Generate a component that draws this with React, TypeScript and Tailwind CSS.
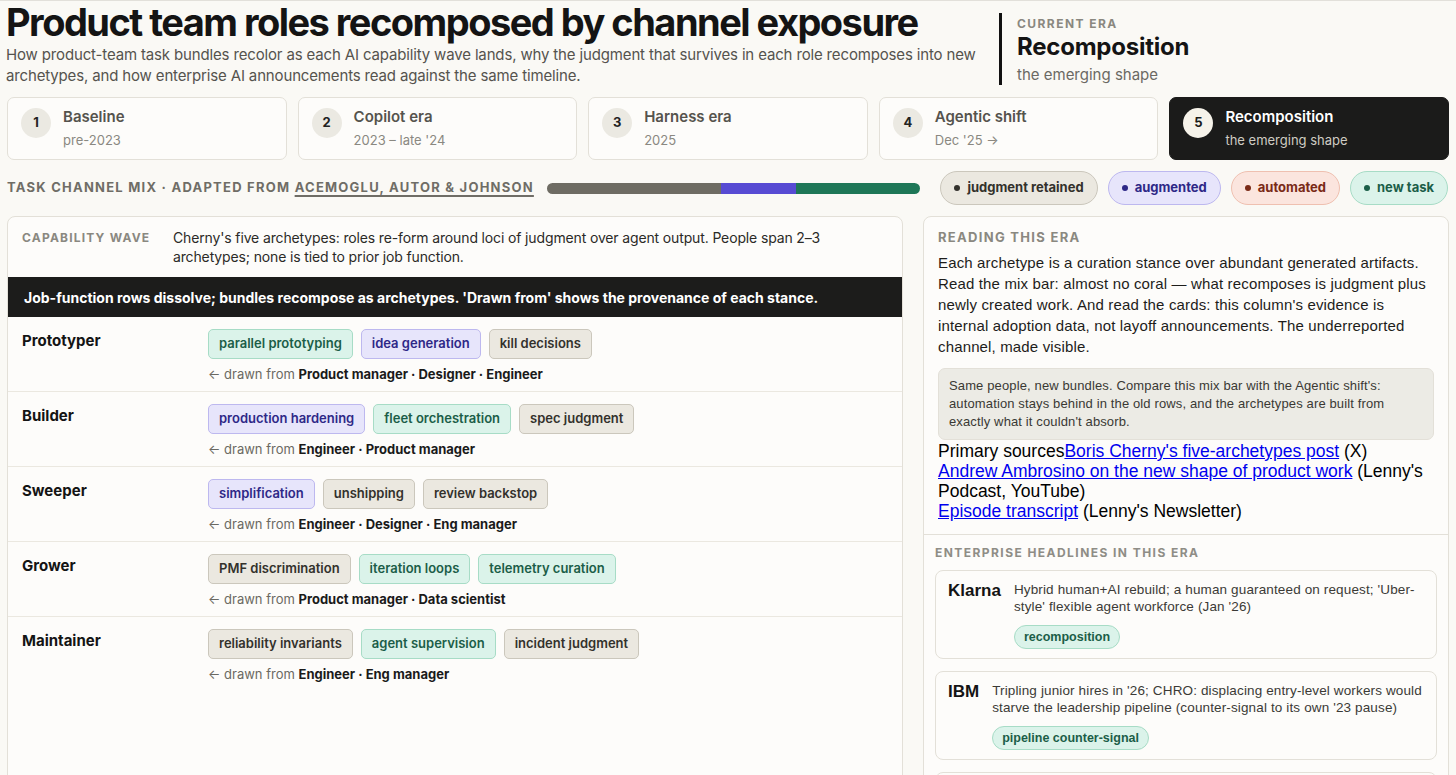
import React from "react";

type Kind = "judgment" | "augmented" | "automated" | "new";

const eras = [
  { n: 1, title: "Baseline", sub: "pre-2023" },
  { n: 2, title: "Copilot era", sub: "2023 – late '24" },
  { n: 3, title: "Harness era", sub: "2025" },
  { n: 4, title: "Agentic shift", sub: "Dec '25 →" },
  { n: 5, title: "Recomposition", sub: "the emerging shape", active: true },
];

const chipCls: Record<Kind, string> = {
  judgment: "bg-[#ebe8e0] border-[#cbc7bc] text-[#33312c]",
  augmented: "bg-[#e7e5fb] border-[#bdb8ef] text-[#2e2887]",
  automated: "bg-[#fbe5de] border-[#efc0b0] text-[#7a2a17]",
  new: "bg-[#dbf3ea] border-[#a7dcc6] text-[#1b5e48]",
};

const legend: { label: string; kind: Kind; dot: string }[] = [
  { label: "judgment retained", kind: "judgment", dot: "bg-[#33312c]" },
  { label: "augmented", kind: "augmented", dot: "bg-[#2e2887]" },
  { label: "automated", kind: "automated", dot: "bg-[#7a2a17]" },
  { label: "new task", kind: "new", dot: "bg-[#1b5e48]" },
];

const archetypes: { name: string; tasks: [string, Kind][]; from: string[] }[] = [
  {
    name: "Prototyper",
    tasks: [
      ["parallel prototyping", "new"],
      ["idea generation", "augmented"],
      ["kill decisions", "judgment"],
    ],
    from: ["Product manager", "Designer", "Engineer"],
  },
  {
    name: "Builder",
    tasks: [
      ["production hardening", "augmented"],
      ["fleet orchestration", "new"],
      ["spec judgment", "judgment"],
    ],
    from: ["Engineer", "Product manager"],
  },
  {
    name: "Sweeper",
    tasks: [
      ["simplification", "augmented"],
      ["unshipping", "judgment"],
      ["review backstop", "judgment"],
    ],
    from: ["Engineer", "Designer", "Eng manager"],
  },
  {
    name: "Grower",
    tasks: [
      ["PMF discrimination", "judgment"],
      ["iteration loops", "new"],
      ["telemetry curation", "new"],
    ],
    from: ["Product manager", "Data scientist"],
  },
  {
    name: "Maintainer",
    tasks: [
      ["reliability invariants", "judgment"],
      ["agent supervision", "new"],
      ["incident judgment", "judgment"],
    ],
    from: ["Engineer", "Eng manager"],
  },
];

const headlines = [
  {
    org: "Klarna",
    text: "Hybrid human+AI rebuild; a human guaranteed on request; 'Uber-style' flexible agent workforce (Jan '26)",
    tag: "recomposition",
  },
  {
    org: "IBM",
    text: "Tripling junior hires in '26; CHRO: displacing entry-level workers would starve the leadership pipeline (counter-signal to its own '23 pause)",
    tag: "pipeline counter-signal",
  },
  {
    org: "Shopify",
    text: "Reflexive AI usage made a baseline expectation; teams prove AI can't do the work before asking for headcount",
    tag: "recomposition",
  },
];

function EraTab({ n, title, sub, active }: { n: number; title: string; sub: string; active?: boolean }) {
  return (
    <div
      className={
        "flex items-start gap-[12px] rounded-[7px] border px-[13px] pt-[9px] pb-[10px] " +
        (active ? "bg-[#1b1b1a] border-[#1b1b1a]" : "bg-[#fdfcfa] border-[#e3e0d8]")
      }
    >
      <div
        className={
          "mt-[1px] flex h-[30px] w-[30px] shrink-0 items-center justify-center rounded-full text-[13px] font-bold " +
          (active ? "bg-[#f6f3ea] text-[#1b1b1a]" : "bg-[#ebe9e2] text-[#222]")
        }
      >
        {n}
      </div>
      <div className="flex flex-col gap-[4px]">
        <div className={"text-[15px] font-semibold leading-[20px] " + (active ? "text-white" : "text-[#55534d]")}>{title}</div>
        <div className={"text-[13px] leading-[18px] " + (active ? "text-[#cfccc3]" : "text-[#8a8881]")}>{sub}</div>
      </div>
    </div>
  );
}

function Chip({ label, kind }: { label: string; kind: Kind }) {
  return (
    <span
      className={
        "inline-flex h-[30px] items-center rounded-[5px] border px-[10px] text-[13px] font-semibold " + chipCls[kind]
      }
    >
      {label}
    </span>
  );
}

export default function App() {
  return (
    <div className="h-[775px] w-full overflow-hidden border-t border-[#e2e0da] bg-[#faf9f5] font-['Inter',sans-serif] text-[#1a1a1a]">
      {/* heading */}
      <header className="flex items-start pl-[6px] pr-[8px]">
        <div className="w-[975px]">
          <h1 className="text-[38px] font-bold leading-[43px] tracking-[-0.04em] text-[#141414]">
            Product team roles recomposed by channel exposure
          </h1>
          <p className="text-[15px] leading-[21px] tracking-[-0.01em] text-[#55534e]">
            How product-team task bundles recolor as each AI capability wave lands, why the judgment that survives in each
            role recomposes into new archetypes, and how enterprise AI announcements read against the same timeline.
          </p>
        </div>
        <div className="ml-[18px] mt-[12px] flex h-[72px] flex-col border-l-[3px] border-[#111] pl-[15px] pt-[3px]">
          <div className="text-[12px] font-bold uppercase leading-[16px] tracking-[0.12em] text-[#8a8880]">Current era</div>
          <div className="text-[24px] font-bold leading-[30px] tracking-[-0.01em] text-[#141414]">Recomposition</div>
          <div className="mt-[2px] text-[15px] leading-[21px] text-[#6b6963]">the emerging shape</div>
        </div>
      </header>

      {/* era selector */}
      <nav className="mt-[11px] grid grid-cols-5 gap-[11px] px-[7px]">
        {eras.map((e) => (
          <EraTab key={e.n} {...e} />
        ))}
      </nav>

      {/* channel mix */}
      <div className="mt-[11px] flex h-[34px] items-center pl-[7px] pr-[8px]">
        <div className="shrink-0 text-[13px] font-bold uppercase tracking-[0.095em] text-[#6f6d66]">
          Task channel mix · adapted from{" "}
          <span className="underline decoration-[1.5px] underline-offset-[3px]">Acemoglu, Autor &amp; Johnson</span>
        </div>
        <div className="ml-[13px] flex h-[11px] flex-1 overflow-hidden rounded-full">
          <div className="h-full bg-[#6e6c63]" style={{ width: "46.7%" }} />
          <div className="h-full bg-[#574bd3]" style={{ width: "20.1%" }} />
          <div className="h-full bg-[#1e7757]" style={{ width: "33.2%" }} />
        </div>
        <div className="ml-[20px] flex shrink-0 items-center gap-[10px]">
          {legend.map((l) => (
            <span
              key={l.label}
              className={
                "inline-flex h-[34px] items-center gap-[7px] rounded-full border pl-[13px] pr-[13px] text-[13px] font-bold " +
                chipCls[l.kind]
              }
            >
              <span className={"h-[6px] w-[6px] rounded-full " + l.dot} />
              {l.label}
            </span>
          ))}
        </div>
      </div>

      {/* panels */}
      <div className="mt-[11px] flex gap-[20px] px-[7px]">
        {/* archetype board */}
        <section className="h-[600px] w-[896px] shrink-0 rounded-t-[8px] border border-[#e3e0d8] bg-[#fdfcfa]">
          <div className="flex pl-[14px] pr-[20px] pt-[11px] pb-[11px]">
            <div className="w-[151px] shrink-0 pt-[1px] text-[12px] font-bold uppercase leading-[17px] tracking-[0.1em] text-[#8a8880]">
              Capability wave
            </div>
            <p className="text-[14px] leading-[19px] tracking-[-0.01em] text-[#2b2a27]">
              Cherny's five archetypes: roles re-form around loci of judgment over agent output. People span 2–3
              archetypes; none is tied to prior job function.
            </p>
          </div>
          <div className="flex h-[40px] items-center bg-[#1c1c1b] px-[16px] text-[14px] font-bold text-white">
            Job-function rows dissolve; bundles recompose as archetypes. 'Drawn from' shows the provenance of each stance.
          </div>
          {archetypes.map((a, i) => (
            <div
              key={a.name}
              className={
                "flex h-[75px] pl-[14px] " + (i < archetypes.length - 1 ? "border-b border-[#ebe8e0]" : "")
              }
            >
              <div className="w-[186px] shrink-0 pt-[14px] text-[15px] font-bold leading-[20px] text-[#141414]">
                {a.name}
              </div>
              <div className="pt-[12px]">
                <div className="flex gap-[8px]">
                  {a.tasks.map(([t, k]) => (
                    <Chip key={t} label={t} kind={k} />
                  ))}
                </div>
                <div className="mt-[6px] text-[13px] leading-[18px] text-[#6b6962]">
                  ← drawn from <span className="font-bold text-[#1a1a1a]">{a.from.join(" · ")}</span>
                </div>
              </div>
            </div>
          ))}
        </section>

        {/* era notes */}
        <aside className="h-[600px] flex-1 rounded-t-[8px] border border-[#e3e0d8] bg-[#fdfcfa]">
          <div className="border-b border-[#e3e0d8] px-[14px] pt-[11px] pb-[13px]">
            <div className="text-[13px] font-bold uppercase leading-[18px] tracking-[0.1em] text-[#8a8880]">
              Reading this era
            </div>
            <p className="mt-[6px] font-['Liberation_Sans',Arial,sans-serif] text-[15px] leading-[21px] tracking-[0.01em] text-[#1e1d1b]">
              Each archetype is a curation stance over abundant generated artifacts. Read the mix bar: almost no coral —
              what recomposes is judgment plus newly created work. And read the cards: this column's evidence is internal
              adoption data, not layoff announcements. The underreported channel, made visible.
            </p>
            <div className="mt-[11px] rounded-[7px] border border-[#e3e0d8] bg-[#ecebe5] px-[10px] py-[8px] font-['Liberation_Sans',Arial,sans-serif] text-[13px] leading-[18px] tracking-[0.01em] text-[#3a3934]">
              Same people, new bundles. Compare this mix bar with the Agentic shift's: automation stays behind in the old
              rows, and the archetypes are built from exactly what it couldn't absorb.
            </div>
            <div className="mt-[1px] font-['Liberation_Sans',Arial,sans-serif] text-[17.5px] leading-[20px] text-black">
              Primary sources
              <a className="text-[#0000ee] underline">Boris Cherny's five-archetypes post</a> (X)
              <br />
              <a className="text-[#0000ee] underline">Andrew Ambrosino on the new shape of product work</a> (Lenny's
              Podcast, YouTube)
              <br />
              <a className="text-[#0000ee] underline">Episode transcript</a> (Lenny's Newsletter)
            </div>
          </div>
          <div className="px-[11px] pt-[11px]">
            <div className="text-[12px] font-bold uppercase leading-[14px] tracking-[0.12em] text-[#8f8d86]">
              Enterprise headlines in this era
            </div>
            <div className="mt-[10px] flex flex-col gap-[12px]">
              {headlines.map((h) => (
                <div
                  key={h.org}
                  className="flex gap-[13px] rounded-[8px] border border-[#e3e0d8] bg-[#fdfcfa] px-[12px] pt-[10px] pb-[9px] font-['Liberation_Sans',Arial,sans-serif]"
                >
                  <div className="shrink-0 text-[17px] font-bold leading-[20px] text-[#141414]">{h.org}</div>
                  <div>
                    <div className="text-[13.5px] leading-[17px] tracking-[0.01em] text-[#3b3a36]">{h.text}</div>
                    <span className="mt-[10px] inline-flex h-[24px] items-center rounded-full border border-[#a7dcc6] bg-[#dbf3ea] px-[9px] text-[12.5px] font-bold text-[#1b5e48]">
                      {h.tag}
                    </span>
                  </div>
                </div>
              ))}
            </div>
          </div>
        </aside>
      </div>
    </div>
  );
}
